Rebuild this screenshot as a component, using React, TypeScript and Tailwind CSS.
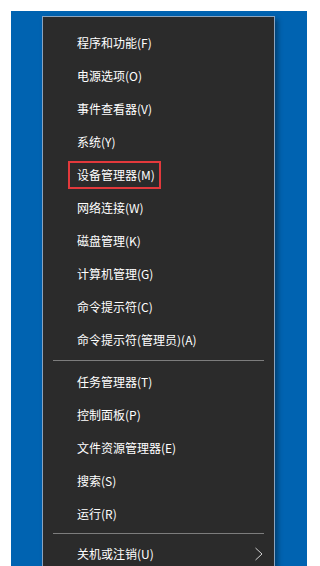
const groups: string[][] = [
  [
    "程序和功能(F)",
    "电源选项(O)",
    "事件查看器(V)",
    "系统(Y)",
    "设备管理器(M)",
    "网络连接(W)",
    "磁盘管理(K)",
    "计算机管理(G)",
    "命令提示符(C)",
    "命令提示符(管理员)(A)",
  ],
  ["任务管理器(T)", "控制面板(P)", "文件资源管理器(E)", "搜索(S)", "运行(R)"],
];

const Row = ({ label }: { label: string }) => {
  const marked = label === "设备管理器(M)";
  return (
    <div className="flex h-[33px] items-center pl-[34px] text-[12px] leading-none text-white">
      {marked ? (
        <span className="-ml-[9px] flex h-[28px] items-center border-2 border-[#e2393c] pl-[7px] pr-[4px]">
          {label}
        </span>
      ) : (
        <span>{label}</span>
      )}
    </div>
  );
};

export default function App() {
  return (
    <div
      className="h-[566px] w-[307px] overflow-hidden bg-white pl-[11px] pt-[11px]"
      style={{ fontFamily: '"Noto Sans CJK SC", "Noto Sans", sans-serif' }}
    >
      <div className="h-full w-full bg-[#0063b1] pl-[31px] pt-[5px]">
        <div className="w-[233px] border border-[#8aa4c0] bg-[#2b2b2b] pt-[9px] pb-4 shadow-[3px_3px_5px_rgba(0,0,0,0.35)]">
          {groups[0].map((l) => (
            <Row key={l} label={l} />
          ))}
          <div className="px-[10px] py-[4px]">
            <div className="h-px bg-[#7d7d7d]" />
          </div>
          {groups[1].map((l) => (
            <Row key={l} label={l} />
          ))}
          <div className="px-[10px] py-[3px]">
            <div className="h-px bg-[#7d7d7d]" />
          </div>
          <div className="flex h-[33px] items-center justify-between pl-[34px] pr-[10px] text-[12px] leading-none text-white">
            <span>关机或注销(U)</span>
            <svg width="10" height="14" viewBox="0 0 10 14" fill="none">
              <path d="M1.5 1 L8 7 L1.5 13" stroke="#d0d0d0" strokeWidth="1" />
            </svg>
          </div>
        </div>
      </div>
    </div>
  );
}
